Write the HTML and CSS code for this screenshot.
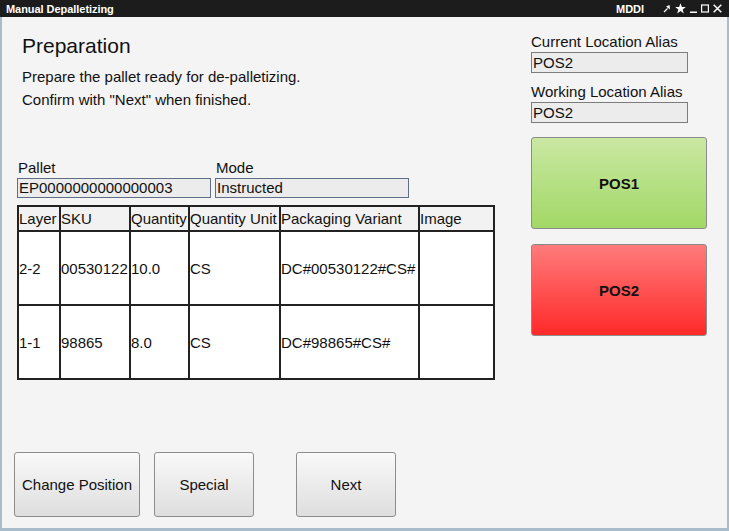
FILE: index.html
```html
<!DOCTYPE html>
<html>
<head>
<meta charset="utf-8">
<link rel="stylesheet" href="styles.css">
</head>
<body>
<div class="window">
  <div class="titlebar">
    <span class="title">Manual Depalletizing</span>
    <span class="app">MDDI</span>
    <span class="icons">
      <svg class="ic" width="8" height="9" viewBox="0 0 8 9"><path d="M1 8 L4.5 4.5" stroke="#fff" stroke-width="1.2"/><path d="M3 2.5 L6.5 1 L7 5.5 Z" fill="#fff"/></svg>
      <svg class="ic" width="11" height="11" viewBox="0 0 11 11"><path d="M5.5 0.3 L6.9 4 L10.8 4.1 L7.7 6.5 L8.8 10.4 L5.5 8.1 L2.2 10.4 L3.3 6.5 L0.2 4.1 L4.1 4 Z" fill="#fff"/></svg>
      <svg class="ic" width="7" height="9" viewBox="0 0 7 9"><rect x="0" y="7.5" width="7" height="1.5" fill="#fff"/></svg>
      <svg class="ic" width="8" height="9" viewBox="0 0 8 9"><rect x="0.6" y="1" width="6.8" height="7" fill="none" stroke="#fff" stroke-width="1.2"/></svg>
      <svg class="ic" width="9" height="9" viewBox="0 0 9 9"><path d="M0.7 0.7 L8.3 8.3 M8.3 0.7 L0.7 8.3" stroke="#fff" stroke-width="1.5"/></svg>
    </span>
  </div>
  <div class="body">
    <div class="left">
      <div class="intro">
        <h1>Preparation</h1>
        <p>Prepare the pallet ready for de-palletizing.<br>Confirm with "Next" when finished.</p>
      </div>
      <div class="fields">
        <div class="field">
          <label>Pallet</label>
          <div class="input wide">EP0000000000000003</div>
        </div>
        <div class="field">
          <label>Mode</label>
          <div class="input wide">Instructed</div>
        </div>
      </div>
      <table class="grid">
        <colgroup>
          <col class="c1"><col class="c2"><col class="c3"><col class="c4"><col class="c5"><col class="c6">
        </colgroup>
        <thead>
          <tr><th>Layer</th><th>SKU</th><th>Quantity</th><th>Quantity Unit</th><th>Packaging Variant</th><th>Image</th></tr>
        </thead>
        <tbody>
          <tr><td>2-2</td><td>00530122</td><td>10.0</td><td>CS</td><td>DC#00530122#CS#</td><td></td></tr>
          <tr><td>1-1</td><td>98865</td><td>8.0</td><td>CS</td><td>DC#98865#CS#</td><td></td></tr>
        </tbody>
      </table>
      <div class="actions">
        <button class="btn btn-change">Change Position</button>
        <button class="btn btn-special">Special</button>
        <button class="btn btn-next">Next</button>
      </div>
    </div>
    <div class="right">
      <label class="rlabel">Current Location Alias</label>
      <div class="input alias">POS2</div>
      <label class="rlabel">Working Location Alias</label>
      <div class="input alias">POS2</div>
      <button class="pos pos-green">POS1</button>
      <button class="pos pos-red">POS2</button>
    </div>
  </div>
</div>
</body>
</html>
```

FILE: styles.css
```css
* { box-sizing: border-box; }
html, body { margin: 0; padding: 0; }
body {
  font-family: "Liberation Sans", Arial, sans-serif;
  color: #111;
  background: #f4f4f4;
}
.window {
  width: 729px;
  height: 531px;
  display: flex;
  flex-direction: column;
  background: #f4f4f4;
  border-left: 2px solid #a8bccb;
  border-right: 2px solid #a8bccb;
  border-bottom: 3px solid #a8bccb;
}
.titlebar {
  height: 17px;
  margin: 0 -2px;
  background: #1c1c1c;
  color: #fff;
  display: flex;
  align-items: center;
  padding-left: 6px;
  font-weight: bold;
  font-size: 11px;
  letter-spacing: -0.05px;
}
.title { flex: 1; }
.app { margin-right: 19px; }
.icons { display: flex; align-items: center; gap: 4px; padding-right: 7px; }
.ic { display: block; }
.body { flex: 1; display: flex; }
.left {
  width: 529px;
  display: flex;
  flex-direction: column;
  padding-top: 16px;
}
.intro { padding-left: 20px; }
h1 {
  margin: 0;
  font-size: 21px;
  font-weight: normal;
  line-height: 26px;
}
p {
  margin: 6px 0 0;
  font-size: 15px;
  line-height: 23px;
}
.fields {
  display: flex;
  gap: 4px;
  padding-left: 15px;
  margin-top: 48px;
}
.field label {
  display: block;
  font-size: 15px;
  line-height: 18px;
  padding-left: 1px;
}
.field .input { margin-top: 1px; }
.input {
  background: #ececec;
  border: 1px solid #5f6d86;
  font-size: 15px;
  line-height: 19px;
  height: 21px;
  padding-left: 1px;
  white-space: nowrap;
}
.input.wide { width: 194px; height: 20px; line-height: 18px; }
.grid {
  margin: 7px 0 0 15px;
  border-collapse: collapse;
  table-layout: fixed;
  width: 476px;
  font-size: 15px;
  border: 2px solid #1a1a1a;
}
.grid th, .grid td {
  border: 2px solid #222;
  padding: 0;
  text-align: left;
  font-weight: normal;
  white-space: nowrap;
  overflow: hidden;
}
.grid th { height: 25px; background: #f2f2f2; }
.grid td { height: 74px; background: #fff; }
.c1 { width: 42px; }
.c2 { width: 70px; }
.c3 { width: 59px; }
.c4 { width: 91px; }
.c5 { width: 139px; }
.c6 { width: 75px; }
.actions {
  margin-top: auto;
  margin-bottom: 11px;
  padding-left: 12px;
  display: flex;
}
.btn {
  height: 65px;
  border: 1px solid #8d8d8d;
  border-radius: 3px;
  background: linear-gradient(#f9f9f9, #dedede);
  font-family: "Liberation Sans", Arial, sans-serif;
  font-size: 15px;
  color: #111;
  padding: 0;
}
.btn-change { width: 126px; }
.btn-special { width: 100px; margin-left: 14px; }
.btn-next { width: 100px; margin-left: 42px; }
.right {
  width: 176px;
  display: flex;
  flex-direction: column;
  padding-top: 16px;
}
.rlabel {
  font-size: 15px;
  line-height: 18px;
}
.alias {
  width: 157px;
  height: 21px;
  margin-top: 1px;
  border-color: #7c7c7c;
  line-height: 19px;
}
.alias + .rlabel { margin-top: 10px; }
.pos {
  height: 92px;
  width: 176px;
  border: 1px solid #8c8c8c;
  border-radius: 3px;
  font-family: "Liberation Sans", Arial, sans-serif;
  font-weight: bold;
  font-size: 15px;
  color: #111;
  padding: 0;
}
.pos-green {
  margin-top: 14px;
  background: linear-gradient(#c9e8a2, #a2d866);
}
.pos-red {
  margin-top: 15px;
  background: linear-gradient(#ff7b7b, #ff2929);
}
```
